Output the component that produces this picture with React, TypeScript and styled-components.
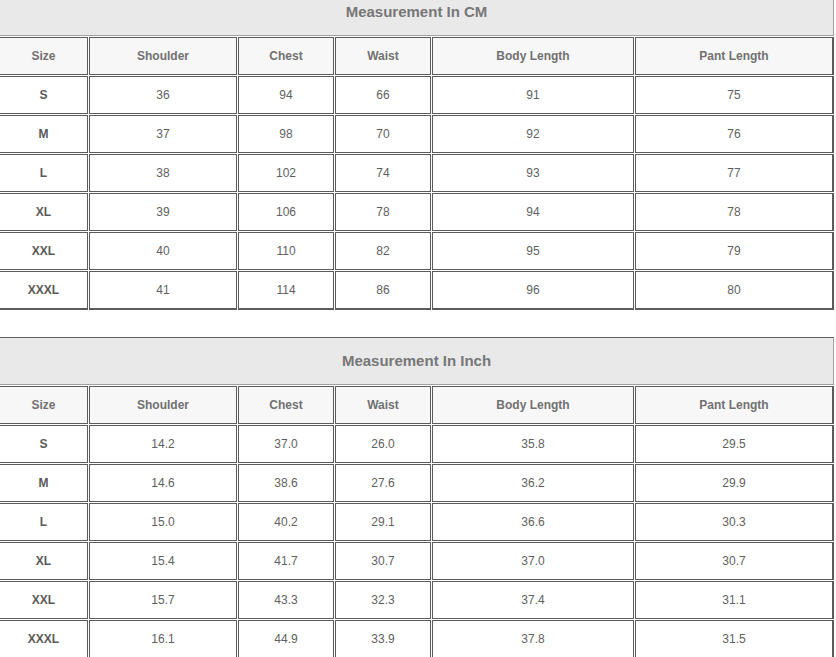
import React from 'react';
import styled, { createGlobalStyle } from 'styled-components';

const GlobalStyle = createGlobalStyle`
  html, body {
    margin: 0;
    padding: 0;
    background: #fff;
    overflow: hidden;
  }
  body {
    font-family: "Liberation Sans", Arial, sans-serif;
  }
`;

const Page = styled.div`
  width: 836px;
  height: 657px;
  overflow: hidden;
`;

const Stack = styled.div`
  display: flex;
  flex-direction: column;
  gap: 25px;
  margin: -13px 0 0 -2px;
`;

const Table = styled.table`
  width: 837px;
  table-layout: fixed;
  border-collapse: separate;
  border-spacing: 1px;
  color: #555;
`;

const TitleCell = styled.th`
  box-sizing: border-box;
  height: 48px;
  padding: 0 0 2px;
  background: #e9e9e9;
  border: 1px solid #a0a0a0;
  border-top-color: #5e5e5e;
  color: #777;
  font-size: 15px;
  font-weight: bold;
  text-align: center;
  vertical-align: middle;
`;

const Cell = styled.td<{ $head?: boolean; $bold?: boolean; $last?: boolean; $bottom?: boolean }>`
  box-sizing: border-box;
  height: ${p => (p.$bottom ? 39 : 38)}px;
  padding: 0 0 ${p => (p.$head ? 1 : 0)}px;
  border: 1px solid #5c5c5c;
  border-right-width: ${p => (p.$last ? 2 : 1)}px;
  border-bottom-width: ${p => (p.$bottom ? 2 : 1)}px;
  background: ${p => (p.$head ? '#f7f7f7' : '#fff')};
  color: ${p => (p.$head ? '#717171' : p.$bold ? '#5a5a5a' : '#5f5f5f')};
  font-size: 12px;
  font-weight: ${p => (p.$head || p.$bold ? 'bold' : 'normal')};
  text-align: center;
  vertical-align: middle;
  white-space: nowrap;
`;

const widths = [89, 148, 96, 96, 202, 199];
const headers = ['Size', 'Shoulder', 'Chest', 'Waist', 'Body Length', 'Pant Length'];

const cm = [
  ['S', '36', '94', '66', '91', '75'],
  ['M', '37', '98', '70', '92', '76'],
  ['L', '38', '102', '74', '93', '77'],
  ['XL', '39', '106', '78', '94', '78'],
  ['XXL', '40', '110', '82', '95', '79'],
  ['XXXL', '41', '114', '86', '96', '80']
];

const inch = [
  ['S', '14.2', '37.0', '26.0', '35.8', '29.5'],
  ['M', '14.6', '38.6', '27.6', '36.2', '29.9'],
  ['L', '15.0', '40.2', '29.1', '36.6', '30.3'],
  ['XL', '15.4', '41.7', '30.7', '37.0', '30.7'],
  ['XXL', '15.7', '43.3', '32.3', '37.4', '31.1'],
  ['XXXL', '16.1', '44.9', '33.9', '37.8', '31.5']
];

const SizeTable: React.FC<{ title: string; rows: string[][] }> = ({ title, rows }) => (
  <Table>
    <colgroup>
      {widths.map((w, i) => (
        <col key={i} style={{ width: w }} />
      ))}
    </colgroup>
    <thead>
      <tr>
        <TitleCell colSpan={6}>{title}</TitleCell>
      </tr>
      <tr>
        {headers.map((h, i) => (
          <Cell as="th" key={h} $head $last={i === 5}>
            {h}
          </Cell>
        ))}
      </tr>
    </thead>
    <tbody>
      {rows.map((r, ri) => (
        <tr key={r[0]}>
          {r.map((v, i) => (
            <Cell key={i} $bold={i === 0} $last={i === 5} $bottom={ri === rows.length - 1}>
              {v}
            </Cell>
          ))}
        </tr>
      ))}
    </tbody>
  </Table>
);

const App: React.FC = () => (
  <Page>
    <GlobalStyle />
    <Stack>
      <SizeTable title="Measurement In CM" rows={cm} />
      <SizeTable title="Measurement In Inch" rows={inch} />
    </Stack>
  </Page>
);

export default App;
